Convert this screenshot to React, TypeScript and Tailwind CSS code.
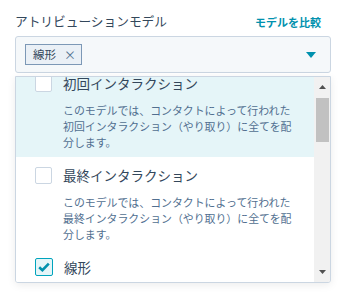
import React from "react";

const items = [
  {
    title: "初回インタラクション",
    lines: ["このモデルでは、コンタクトによって行われた", "初回インタラクション（やり取り）に全てを配", "分します。"],
    checked: false,
    active: true,
  },
  {
    title: "最終インタラクション",
    lines: ["このモデルでは、コンタクトによって行われた", "最終インタラクション（やり取り）に全てを配", "分します。"],
    checked: false,
    active: false,
  },
  { title: "線形", lines: [], checked: true, active: false },
];

function Checkbox({ checked }: { checked: boolean }) {
  if (checked) {
    return (
      <div className="w-[18px] h-[18px] shrink-0 rounded-[2px] border border-[#00a4bd] bg-[#e5f5f8] flex items-center justify-center">
        <svg width="12" height="10" viewBox="0 0 12 10">
          <path d="M1.2 5.2 L4.4 8.2 L10.8 1.6" fill="none" stroke="#0091ae" strokeWidth="2.6" />
        </svg>
      </div>
    );
  }
  return <div className="w-[17px] h-[17px] shrink-0 rounded-[2px] border border-[#cbd6e2] bg-white" />;
}

export default function App() {
  return (
    <div className="w-[348px] h-[299px] bg-white overflow-hidden font-['Noto_Sans_CJK_JP',sans-serif] text-[#33475b]">
      <div className="ml-[15px] w-[316px] pt-[11px]">
        <div className="flex items-center justify-between h-[20px]">
          <span className="text-[12.7px]">アトリビューションモデル</span>
          <span className="text-[11px] font-bold text-[#0091ae] mr-[10px] mt-[3px]">モデルを比較</span>
        </div>

        <div className="mt-[5px] h-[37px] border border-[#cbd6e2] bg-[#f5f8fa] rounded-[3px] flex items-center justify-between pl-[9px] pr-[14px]">
          <div className="h-[21px] w-[57px] border border-[#7c98b6] bg-[#eaf0f6] flex items-center pl-[7px]">
            <span className="text-[11.5px]">線形</span>
            <span className="text-[12px] ml-[8px] text-[#516f90]">×</span>
          </div>
          <svg width="10" height="6" viewBox="0 0 10 6">
            <path d="M0 0 L10 0 L5 6 Z" fill="#0091ae" />
          </svg>
        </div>

        <div className="mt-[3px] h-[207px] border border-[#cbd6e2] rounded-b-[3px] bg-white shadow-[0_2px_8px_rgba(0,0,0,0.08)] flex overflow-hidden">
          <div className="flex-1 overflow-hidden">
            <div className="-mt-[12px]">
              {items.map((it) => (
                <div
                  key={it.title}
                  className={`pl-[19px] pr-[10px] pt-[8px] pb-[7px] ${it.active ? "bg-[#e5f5f8]" : "bg-white"}`}
                >
                  <div className="flex items-center gap-[11px] h-[20px]">
                    <Checkbox checked={it.checked} />
                    <span className="text-[13.5px]">{it.title}</span>
                  </div>
                  {it.lines.length > 0 && (
                    <div className="pl-[28px] mt-[9px] text-[10.9px] leading-[16px] text-[#516f90] whitespace-nowrap">
                      {it.lines.map((l) => (
                        <div key={l}>{l}</div>
                      ))}
                    </div>
                  )}
                </div>
              ))}
            </div>
          </div>
          <div className="w-[16px] bg-[#f1f1f1] flex flex-col items-center">
            <svg className="mt-[8px]" width="7" height="4" viewBox="0 0 7 4">
              <path d="M0 4 L7 4 L3.5 0 Z" fill="#505050" />
            </svg>
            <div className="mt-[9px] w-[13px] h-[44px] bg-[#c1c1c1]" />
            <div className="flex-1" />
            <svg className="mb-[8px]" width="7" height="4" viewBox="0 0 7 4">
              <path d="M0 0 L7 0 L3.5 4 Z" fill="#505050" />
            </svg>
          </div>
        </div>
      </div>
    </div>
  );
}
